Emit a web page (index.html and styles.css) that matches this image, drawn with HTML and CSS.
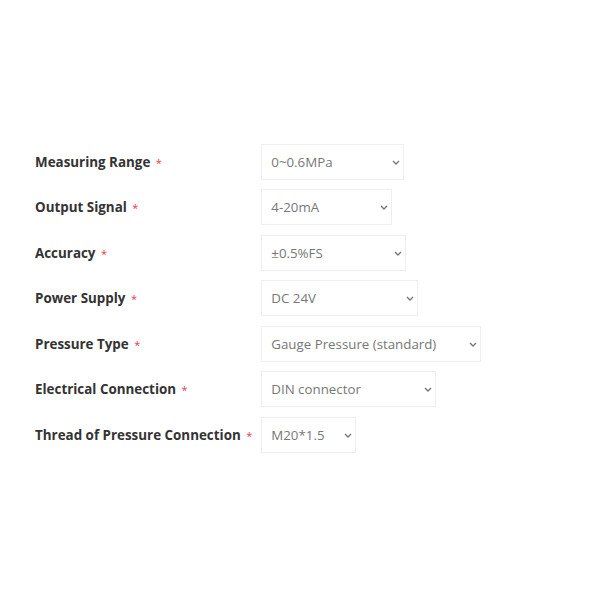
FILE: index.html
```html
<!DOCTYPE html>
<html lang="en">
<head>
<meta charset="UTF-8" />
<meta name="viewport" content="width=device-width, initial-scale=1" />
<title>Product options</title>
<link rel="stylesheet" href="styles.css">
</head>
<body>
  <form class="variations-form">
    <table class="variations">
      <tbody>
        <tr>
          <th class="label"><label for="range">Measuring Range</label> <span class="required">*</span></th>
          <td class="value">
            <div class="select-wrap">
              <select id="range" class="w-range"><option>0~0.6MPa</option></select>
              <svg class="chevron" width="8" height="5" viewBox="0 0 8 5"><path d="M1 1l3 3 3-3" fill="none" stroke="#777" stroke-width="1.4"/></svg>
            </div>
          </td>
        </tr>
        <tr>
          <th class="label"><label for="signal">Output Signal</label> <span class="required">*</span></th>
          <td class="value">
            <div class="select-wrap">
              <select id="signal" class="w-signal"><option>4-20mA</option></select>
              <svg class="chevron" width="8" height="5" viewBox="0 0 8 5"><path d="M1 1l3 3 3-3" fill="none" stroke="#777" stroke-width="1.4"/></svg>
            </div>
          </td>
        </tr>
        <tr>
          <th class="label"><label for="accuracy">Accuracy</label> <span class="required">*</span></th>
          <td class="value">
            <div class="select-wrap">
              <select id="accuracy" class="w-accuracy"><option>±0.5%FS</option></select>
              <svg class="chevron" width="8" height="5" viewBox="0 0 8 5"><path d="M1 1l3 3 3-3" fill="none" stroke="#777" stroke-width="1.4"/></svg>
            </div>
          </td>
        </tr>
        <tr>
          <th class="label"><label for="power">Power Supply</label> <span class="required">*</span></th>
          <td class="value">
            <div class="select-wrap">
              <select id="power" class="w-power"><option>DC 24V</option></select>
              <svg class="chevron" width="8" height="5" viewBox="0 0 8 5"><path d="M1 1l3 3 3-3" fill="none" stroke="#777" stroke-width="1.4"/></svg>
            </div>
          </td>
        </tr>
        <tr>
          <th class="label"><label for="ptype">Pressure Type</label> <span class="required">*</span></th>
          <td class="value">
            <div class="select-wrap">
              <select id="ptype" class="w-ptype"><option>Gauge Pressure (standard)</option></select>
              <svg class="chevron" width="8" height="5" viewBox="0 0 8 5"><path d="M1 1l3 3 3-3" fill="none" stroke="#777" stroke-width="1.4"/></svg>
            </div>
          </td>
        </tr>
        <tr>
          <th class="label"><label for="elec">Electrical Connection</label> <span class="required">*</span></th>
          <td class="value">
            <div class="select-wrap">
              <select id="elec" class="w-elec"><option>DIN connector</option></select>
              <svg class="chevron" width="8" height="5" viewBox="0 0 8 5"><path d="M1 1l3 3 3-3" fill="none" stroke="#777" stroke-width="1.4"/></svg>
            </div>
          </td>
        </tr>
        <tr>
          <th class="label"><label for="thread">Thread of Pressure Connection</label> <span class="required">*</span></th>
          <td class="value">
            <div class="select-wrap">
              <select id="thread" class="w-thread"><option>M20*1.5</option></select>
              <svg class="chevron" width="8" height="5" viewBox="0 0 8 5"><path d="M1 1l3 3 3-3" fill="none" stroke="#777" stroke-width="1.4"/></svg>
            </div>
          </td>
        </tr>
      </tbody>
    </table>
  </form>
</body>
</html>
```

FILE: styles.css
```css
* {
  box-sizing: border-box;
}
body {
  margin: 0;
  background: #fff;
  font-family: 'Open Sans', 'Noto Sans', sans-serif;
  color: #333;
}

.variations-form {
  padding: 139px 35px 0 35px;
}

.variations {
  border-collapse: collapse;
  border-spacing: 0;
}

.variations th,
.variations td {
  padding: 4.75px 0;
  vertical-align: middle;
}

.variations th.label {
  text-align: left;
  font-size: 13.4px;
  font-weight: 700;
  white-space: nowrap;
  padding-right: 9px;
  color: #333;
}

.required {
  color: #e4404f;
  font-size: 11px;
  font-weight: 400;
  margin-left: 2px;
}

.select-wrap {
  position: relative;
  display: inline-block;
}

.select-wrap select {
  appearance: none;
  -webkit-appearance: none;
  height: 36px;
  padding: 0 20px 0 9px;
  border: 1px solid #eee;
  border-radius: 0;
  background: #fff;
  font-family: 'Open Sans', 'Noto Sans', sans-serif;
  font-size: 13.3px;
  color: #777;
  outline: none;
  display: block;
}

.w-range { width: 143px; }
.w-signal { width: 131px; }
.w-accuracy { width: 145px; }
.w-power { width: 157px; }
.w-ptype { width: 220px; }
.w-elec { width: 175px; }
.w-thread { width: 95px; }

.chevron {
  position: absolute;
  right: 4px;
  top: 16px;
  pointer-events: none;
}
```
